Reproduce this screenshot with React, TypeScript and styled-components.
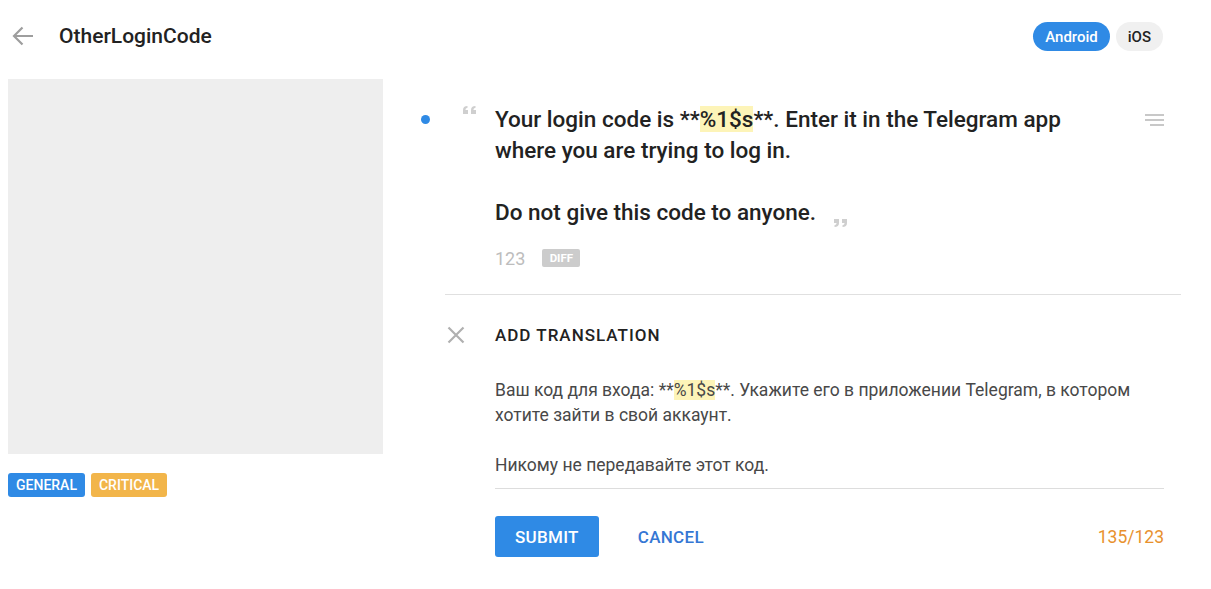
import React from "react";
import styled, { createGlobalStyle } from "styled-components";

const GlobalStyle = createGlobalStyle`
  html, body { margin: 0; padding: 0; background: #fff; }
  body { font-family: Roboto, "Noto Sans", Arial, sans-serif; color: #222; }
  * { box-sizing: border-box; }
`;

const Page = styled.div`
  width: 1211px;
  min-height: 589px;
`;

const Header = styled.header`
  display: flex;
  align-items: center;
  height: 72px;
  padding: 0 48px 0 12px;
`;

const BackButton = styled.button`
  display: flex;
  align-items: center;
  justify-content: center;
  width: 22px;
  height: 24px;
  padding: 0;
  border: 0;
  background: none;
  color: #9e9e9e;
  cursor: pointer;
`;

const Title = styled.h1`
  margin: 0 0 0 25px;
  font-size: 21px;
  font-weight: 500;
  color: #222;
  flex: 1;
`;

const Platforms = styled.div`
  display: flex;
  gap: 6px;
  margin-top: 1px;
`;

const Pill = styled.span<{ $active?: boolean }>`
  display: inline-flex;
  align-items: center;
  height: 29px;
  padding: 0 12px;
  border-radius: 15px;
  font-size: 15px;
  font-weight: 500;
  background: ${(p) => (p.$active ? "#2f8ae5" : "#f0f0f0")};
  color: ${(p) => (p.$active ? "#fff" : "#222")};
`;

const Body = styled.div`
  display: flex;
  padding-left: 8px;
  margin-top: 7px;
`;

const LeftColumn = styled.aside`
  width: 375px;
  flex-shrink: 0;
`;

const Preview = styled.div`
  width: 375px;
  height: 375px;
  background: #eeeeee;
`;

const Tags = styled.div`
  display: flex;
  gap: 6px;
  margin-top: 19px;
`;

const Tag = styled.span<{ $color: string }>`
  display: inline-flex;
  align-items: center;
  height: 24px;
  padding: 0 8px;
  border-radius: 3px;
  font-size: 14px;
  font-weight: 500;
  color: #fff;
  background: ${(p) => p.$color};
`;

const RightColumn = styled.main`
  width: 766px;
  margin-left: 32px;
  padding-top: 25px;
`;

const SourceRow = styled.section`
  display: grid;
  grid-template-columns: 48px 32px 1fr 70px;
  align-items: start;
`;

const Dot = styled.span`
  width: 9px;
  height: 9px;
  margin: 11px 0 0 6px;
  border-radius: 50%;
  background: #2f8ae5;
`;

const QuoteOpen = styled.svg`
  margin-top: 2px;
  color: #cfcfcf;
`;

const SourceText = styled.div`
  font-size: 22.5px;
  font-weight: 500;
  line-height: 31px;
  color: #222;
  white-space: pre-wrap;
`;

const Placeholder = styled.span<{ $small?: boolean }>`
  background: #fdf4b8;
  font-weight: ${(p) => (p.$small ? 400 : 500)};
`;

const QuoteClose = styled.svg`
  display: inline-block;
  margin-left: 17px;
  vertical-align: -7px;
  color: #cfcfcf;
`;

const MenuIcon = styled.svg`
  justify-self: end;
  margin: 10px 17px 0 0;
  color: #c8c8c8;
`;

const Meta = styled.div`
  display: flex;
  align-items: center;
  gap: 17px;
  height: 24px;
  margin-top: 18px;
`;

const Count = styled.span`
  font-size: 18px;
  color: #bdbdbd;
`;

const DiffBadge = styled.span`
  display: inline-flex;
  align-items: center;
  justify-content: center;
  width: 38px;
  height: 18px;
  border-radius: 2px;
  background: #cccccc;
  color: #fff;
  font-size: 11.5px;
  font-weight: 700;
`;

const Divider = styled.hr`
  margin: 24px 0 0 30px;
  border: 0;
  border-top: 1px solid #e0e0e0;
`;

const TranslationHeader = styled.div`
  display: grid;
  grid-template-columns: 80px 1fr;
  align-items: center;
  height: 24px;
  margin-top: 28px;
`;

const CloseButton = styled.button`
  display: flex;
  align-items: center;
  margin-left: 32px;
  padding: 0;
  border: 0;
  background: none;
  color: #b0b0b0;
  cursor: pointer;
`;

const SectionTitle = styled.h2`
  margin: 0;
  font-size: 17px;
  font-weight: 500;
  color: #222;
  letter-spacing: 1px;
`;

const Editor = styled.div`
  margin: 31px 17px 0 80px;
  padding-bottom: 10px;
  border-bottom: 1px solid #dddddd;
  font-size: 17.5px;
  line-height: 25px;
  color: #484848;
  white-space: pre-wrap;
`;

const Actions = styled.div`
  display: flex;
  align-items: center;
  margin: 27px 17px 0 80px;
`;

const SubmitButton = styled.button`
  height: 41px;
  padding: 0 20px;
  border: 0;
  border-radius: 3px;
  background: #2f8ae5;
  color: #fff;
  font-family: inherit;
  font-size: 17px;
  font-weight: 500;
  letter-spacing: 0.3px;
  text-transform: uppercase;
  cursor: pointer;
`;

const CancelButton = styled.button`
  height: 41px;
  margin-left: 23px;
  padding: 0 16px;
  border: 0;
  background: none;
  color: #3577d4;
  font-family: inherit;
  font-size: 17px;
  font-weight: 500;
  letter-spacing: 0.3px;
  text-transform: uppercase;
  cursor: pointer;
`;

const Counter = styled.span`
  margin-left: auto;
  font-size: 17.5px;
  color: #e8912e;
`;

const quoteMark = "M0 8 V4 Q0 0 4.5 0 V1.8 Q2.4 2 2.4 4 H5 V8 Z";

export default function App() {
  return (
    <Page>
      <GlobalStyle />
      <Header>
        <BackButton aria-label="Back">
          <svg width="22" height="20" viewBox="0 0 22 20" fill="none">
            <path d="M21 10H2M10.5 1.5L2 10l8.5 8.5" stroke="currentColor" strokeWidth="2.2" />
          </svg>
        </BackButton>
        <Title>OtherLoginCode</Title>
        <Platforms>
          <Pill $active>Android</Pill>
          <Pill>iOS</Pill>
        </Platforms>
      </Header>
      <Body>
        <LeftColumn>
          <Preview />
          <Tags>
            <Tag $color="#2f8ae5">GENERAL</Tag>
            <Tag $color="#f2b54a">CRITICAL</Tag>
          </Tags>
        </LeftColumn>
        <RightColumn>
          <SourceRow>
            <Dot />
            <QuoteOpen width="14" height="8" viewBox="0 0 14 8" fill="currentColor">
              <path d={quoteMark} />
              <path d={quoteMark} transform="translate(8 0)" />
            </QuoteOpen>
            <div>
              <SourceText>
                Your login code is **<Placeholder>%1$s</Placeholder>**. Enter it in the Telegram app where you are trying to log in.{"\n\n"}Do not give this code to anyone.
                <QuoteClose width="14" height="8" viewBox="0 0 14 8" fill="currentColor">
                  <path d={quoteMark} transform="rotate(180 7 4) translate(8 0)" />
                  <path d={quoteMark} transform="rotate(180 7 4)" />
                </QuoteClose>
              </SourceText>
              <Meta>
                <Count>123</Count>
                <DiffBadge>DIFF</DiffBadge>
              </Meta>
            </div>
            <MenuIcon width="19" height="12" viewBox="0 0 19 12" fill="currentColor">
              <rect x="0" y="0" width="19" height="2" />
              <rect x="0" y="5" width="19" height="2" />
              <rect x="5" y="10" width="14" height="2" />
            </MenuIcon>
          </SourceRow>
          <Divider />
          <TranslationHeader>
            <CloseButton aria-label="Close">
              <svg width="18" height="18" viewBox="0 0 18 18" fill="none">
                <path d="M1.5 1.5l15 15M16.5 1.5l-15 15" stroke="currentColor" strokeWidth="2.2" />
              </svg>
            </CloseButton>
            <SectionTitle>ADD TRANSLATION</SectionTitle>
          </TranslationHeader>
          <Editor>
            Ваш код для входа: **<Placeholder $small>%1$s</Placeholder>**. Укажите его в приложении Telegram, в котором хотите зайти в свой аккаунт.{"\n\n"}Никому не передавайте этот код.
          </Editor>
          <Actions>
            <SubmitButton>Submit</SubmitButton>
            <CancelButton>Cancel</CancelButton>
            <Counter>135/123</Counter>
          </Actions>
        </RightColumn>
      </Body>
    </Page>
  );
}
